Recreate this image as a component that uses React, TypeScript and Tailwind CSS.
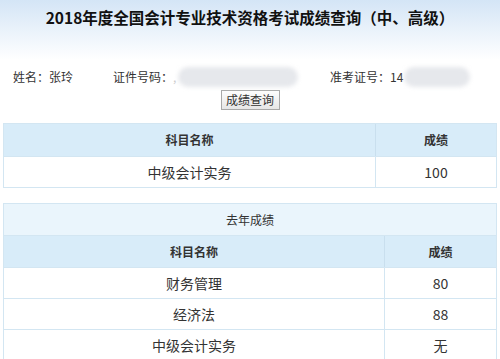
const font = { fontFamily: '"Noto Sans CJK SC", "Liberation Sans", sans-serif' }

const lastYear = [
  { name: "财务管理", score: "80" },
  { name: "经济法", score: "88" },
  { name: "中级会计实务", score: "无" },
]

function Blur({ className }: { className: string }) {
  return <div className={`h-[20px] rounded-full bg-[#e6e8ec] blur-[2px] ${className}`} />
}

export default function App() {
  return (
    <div
      className="h-[359px] w-[500px] overflow-hidden bg-[linear-gradient(to_bottom,#d4e5f6_0px,#ffffff_60px)] text-[#333]"
      style={font}
    >
      {/* Title */}
      <h1 className="pt-[7px] text-center text-[15.5px] font-bold leading-[20px] text-[#111]">
        2018年度全国会计专业技术资格考试成绩查询（中、高级）
      </h1>

      {/* Candidate info */}
      <div className="mt-[40px] flex h-[20px] items-center pl-[13px] text-[12px]">
        <div className="w-[100px]">姓名：张玲</div>
        <div className="flex w-[217px] items-center">
          <span>证件号码：</span>
          <span className="text-[#ccc]">,</span>
          <Blur className="ml-[2px] w-[120px]" />
        </div>
        <div className="flex items-center">
          <span>准考证号：14</span>
          <Blur className="ml-[1px] w-[66px]" />
        </div>
      </div>

      <div className="mt-[3px] flex justify-center">
        <button className="h-[20px] w-[59px] border border-[#a8a8a8] bg-[linear-gradient(to_bottom,#fdfdfd,#e6e6e6)] text-[12px] leading-[18px] text-[#333]">
          成绩查询
        </button>
      </div>

      {/* This year */}
      <div className="mx-[3px] mt-[13px] border border-[#d3e6f2]">
        <div className="flex h-[32px] items-center bg-[#d8ecf9] text-[12px] font-bold">
          <div className="flex h-full w-[372px] items-center justify-center border-r border-[#c9dfee]">
            科目名称
          </div>
          <div className="flex-1 text-center">成绩</div>
        </div>
        <div className="flex h-[31px] items-center border-t border-[#d3e6f2] text-[14px]">
          <div className="flex h-full w-[372px] items-center justify-center border-r border-[#d3e6f2]">
            中级会计实务
          </div>
          <div className="flex-1 text-center">100</div>
        </div>
      </div>

      {/* Last year */}
      <div className="mx-[3px] mt-[15px] border border-[#d3e6f2]">
        <div className="flex h-[31px] items-center justify-center bg-[#eaf5fc] text-[12px]">去年成绩</div>
        <div className="flex h-[32px] items-center border-t border-[#d3e6f2] bg-[#d8ecf9] text-[12px] font-bold">
          <div className="flex h-full w-[381px] items-center justify-center border-r border-[#c9dfee]">
            科目名称
          </div>
          <div className="flex-1 text-center">成绩</div>
        </div>
        {lastYear.map((row) => (
          <div key={row.name} className="flex h-[31px] items-center border-t border-[#d3e6f2] text-[14px]">
            <div className="flex h-full w-[381px] items-center justify-center border-r border-[#d3e6f2]">
              {row.name}
            </div>
            <div className="flex-1 text-center">{row.score}</div>
          </div>
        ))}
      </div>
    </div>
  )
}
